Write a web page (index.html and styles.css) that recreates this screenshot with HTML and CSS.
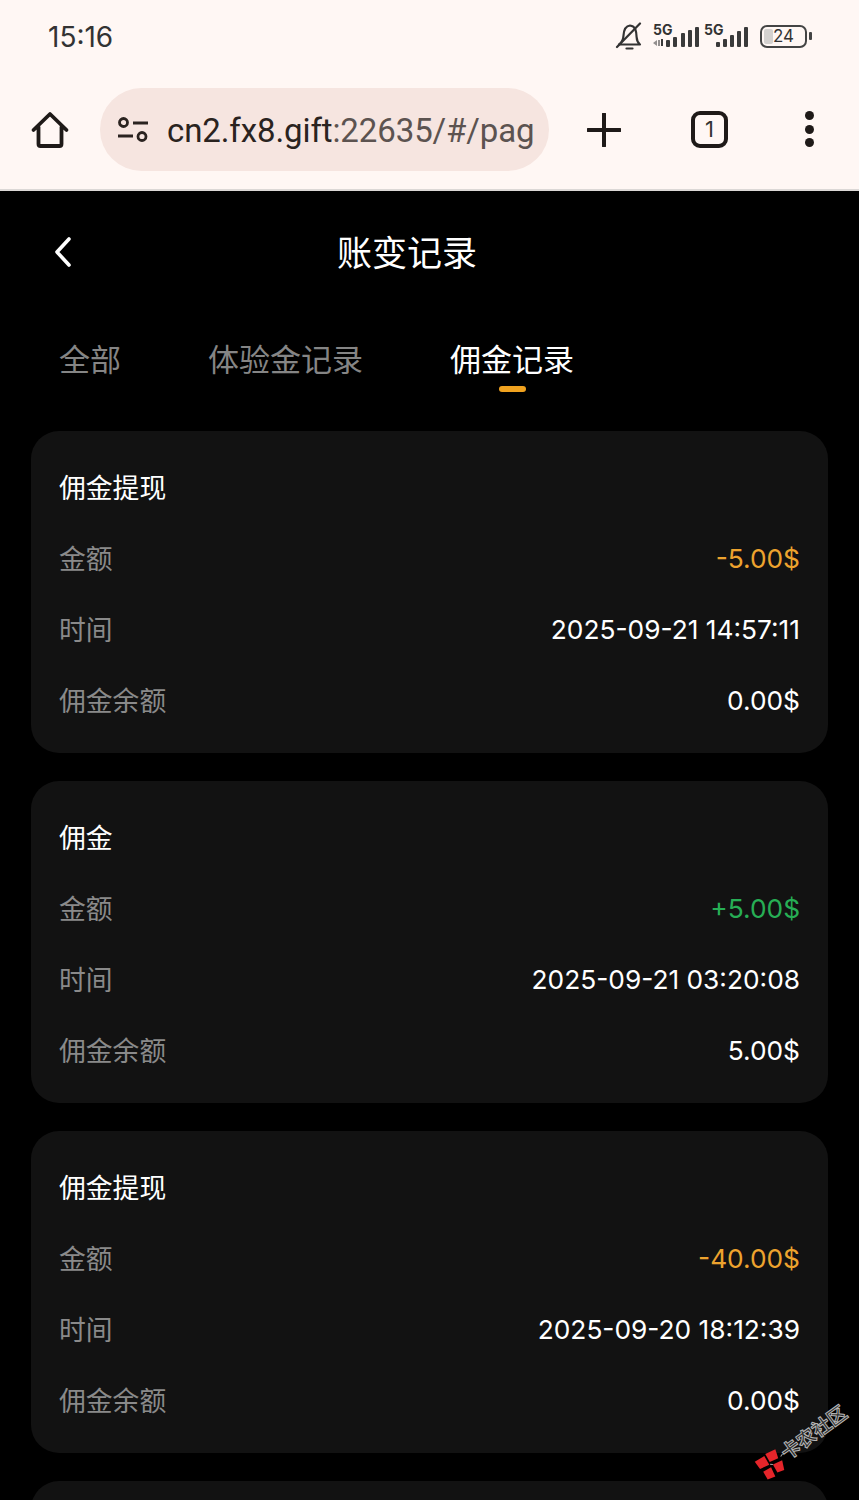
FILE: index.html
```html
<!DOCTYPE html>
<html lang="zh-CN">
<head>
<meta charset="utf-8">
<title>账变记录</title>
<link rel="stylesheet" href="styles.css">
</head>
<body>
<header class="chrome">
  <div class="status">
    <span class="clock">15:16</span>
    <div class="status-icons">
      <svg class="bell" viewBox="0 0 28 28" width="28" height="28"><path d="M4 22.500h21c-2.500-2-3.200-4-3.400-7.500-.3-5.500-.8-11-6.600-11.500C9.500 4 8.800 9 8.500 13.500 8.300 17.500 7.500 20 4 22.500Z" fill="none" stroke="#333" stroke-width="2.200" stroke-linejoin="round"/><path d="M2 25 25 1.500" stroke="#333" stroke-width="2.200" stroke-linecap="round"/><path d="M11.500 26.500h6" stroke="#333" stroke-width="2.200" stroke-linecap="round"/></svg>
      <div class="signal first">
        <span class="net">5G</span>
        <svg viewBox="0 0 46 24" width="46" height="24"><g fill="#3a3a3a"><path d="M0 19l4-3v6zM5 16h2v6H5z" opacity=".55"/><path d="M8 15h2v7H8z"/><rect x="13" y="16" width="4" height="7" rx="1"/><rect x="20" y="13" width="4" height="10" rx="1"/><rect x="28" y="9" width="4" height="14" rx="1"/><rect x="35" y="6" width="4" height="17" rx="1"/><rect x="42" y="3" width="4" height="20" rx="1"/></g></svg>
      </div>
      <div class="signal second">
        <span class="net">5G</span>
        <svg viewBox="0 0 45 24" width="45" height="24"><g fill="#3a3a3a"><rect x="12" y="18" width="4" height="5" rx="1"/><rect x="19" y="15" width="4" height="8" rx="1"/><rect x="26" y="11" width="4" height="12" rx="1"/><rect x="33" y="7" width="4" height="16" rx="1"/><rect x="40" y="3" width="4" height="20" rx="1"/></g></svg>
      </div>
      <div class="battery"><span class="battery-fill"></span><span class="battery-num">24</span></div>
      <span class="battery-cap"></span>
    </div>
  </div>
  <div class="toolbar">
    <svg class="home" viewBox="0 0 40 40" width="40" height="40"><path d="M3.500 20 20 4l16.500 16M8.500 17v17a2 2 0 0 0 2 2h19a2 2 0 0 0 2-2V17" fill="none" stroke="#1f1a18" stroke-width="3.800" stroke-linecap="round" stroke-linejoin="round"/></svg>
    <div class="omnibox">
      <svg class="tune" viewBox="0 0 34 28" width="34" height="28"><g fill="none" stroke="#2a2320" stroke-width="2.800"><circle cx="6.500" cy="6.500" r="4"/><circle cx="25" cy="20.500" r="4"/><path d="M16 7h15M1 20h15"/></g></svg>
      <div class="url"><span class="url-host">cn2.fx8.gift</span><span class="url-rest">:22635/#/pag</span></div>
    </div>
    <svg class="plus" viewBox="0 0 34 34" width="34" height="34"><path d="M17 1v32M1 17h32" stroke="#1f1a18" stroke-width="4" stroke-linecap="round"/></svg>
    <div class="tabs-count">1</div>
    <div class="menu"><i></i><i></i><i></i></div>
  </div>
</header>

<main class="page">
  <div class="nav">
    <svg class="back" viewBox="0 0 18 30" width="18" height="30"><path d="M15 2 3 15l12 13" fill="none" stroke="#fff" stroke-width="3.600" stroke-linecap="round" stroke-linejoin="round"/></svg>
    <h1 class="nav-title">账变记录</h1>
  </div>
  <nav class="tabs">
    <span class="tab">全部</span>
    <span class="tab">体验金记录</span>
    <span class="tab active">佣金记录</span>
  </nav>

  <section class="list">
    <article class="card">
      <h2 class="card-title">佣金提现</h2>
      <div class="row"><span class="label">金额</span><span class="value minus">-5.00$</span></div>
      <div class="row"><span class="label">时间</span><span class="value">2025-09-21 14:57:11</span></div>
      <div class="row"><span class="label">佣金余额</span><span class="value">0.00$</span></div>
    </article>
    <article class="card">
      <h2 class="card-title">佣金</h2>
      <div class="row"><span class="label">金额</span><span class="value plus-val">+5.00$</span></div>
      <div class="row"><span class="label">时间</span><span class="value">2025-09-21 03:20:08</span></div>
      <div class="row"><span class="label">佣金余额</span><span class="value">5.00$</span></div>
    </article>
    <article class="card">
      <h2 class="card-title">佣金提现</h2>
      <div class="row"><span class="label">金额</span><span class="value minus">-40.00$</span></div>
      <div class="row"><span class="label">时间</span><span class="value">2025-09-20 18:12:39</span></div>
      <div class="row"><span class="label">佣金余额</span><span class="value">0.00$</span></div>
    </article>
    <article class="card"></article>
  </section>
</main>

<div class="watermark">
  <svg class="wm-logo" viewBox="0 0 26 26" width="26" height="26"><g fill="#e5252a"><path d="M1 1l11 1-1 10-10-2z"/><path d="M14 1l11 2-3 9-9-2z"/><path d="M2 14l9 1-2 10-8-2z"/><path d="M14 14l10 2-4 9-7-2z"/></g><path d="M12 12l2 2M25 12l3-1" stroke="#aaa" stroke-width="1"/></svg>
  <span class="wm-text">卡农社区</span>
</div>
</body>
</html>
```
FILE: styles.css
```css
* { box-sizing: border-box; }
html, body { margin: 0; padding: 0; }
body {
  width: 859px;
  height: 1500px;
  overflow: hidden;
  position: relative;
  background: #000;
  font-family: Inter, "Noto Sans CJK SC", sans-serif;
}

.chrome {
  height: 191px;
  background: #fff7f4;
  border-bottom: 2px solid #dcd8d6;
}
.status {
  height: 75px;
  padding: 19px 47px 0 48px;
  display: flex;
  justify-content: space-between;
  align-items: flex-start;
}
.clock { font-size: 28px; line-height: 36px; color: #333; font-weight: 400; }
.status-icons { display: flex; align-items: center; height: 34px; }
.bell { margin-right: 10px; flex: none; }
.signal { position: relative; height: 24px; flex: none; }
.signal.first { width: 46px; }
.signal.second { width: 45px; margin-left: 5px; }
.signal svg { display: block; }
.signal .net {
  position: absolute;
  left: 0;
  top: -1px;
  font-size: 14px;
  font-weight: 700;
  line-height: 14px;
  color: #333;
}
.battery {
  position: relative;
  width: 47px;
  height: 23px;
  margin-left: 11px;
  border: 2.500px solid #444;
  border-radius: 7px;
  display: flex;
  align-items: center;
  justify-content: center;
  overflow: hidden;
  flex: none;
}
.battery-fill { position: absolute; left: 2px; top: 2px; bottom: 2px; width: 9px; background: #d4d1cf; border-radius: 2px; }
.battery-num { position: relative; font-size: 17px; color: #333; line-height: 18px; }
.battery-cap { width: 3px; height: 8px; margin-left: 2px; background: #444; border-radius: 1px; flex: none; }

.toolbar {
  height: 114px;
  display: flex;
  align-items: flex-start;
  padding: 13px 0 0 30px;
}
.home { margin-top: 22px; flex: none; }
.omnibox {
  width: 449px;
  height: 83px;
  margin-left: 30px;
  border-radius: 42px;
  background: #f6e5e0;
  display: flex;
  align-items: center;
  padding-left: 17px;
  flex: none;
  overflow: hidden;
}
.tune { flex: none; }
.url {
  margin-left: 16px;
  white-space: nowrap;
  font-family: Roboto, sans-serif;
  font-size: 33px;
  line-height: 44px;
  letter-spacing: -0.1px;
  padding-top: 2px;
}
.url-host { color: #2a2320; }
.url-rest { color: #5c5350; }
.plus { margin: 25px 0 0 38px; flex: none; }
.tabs-count {
  margin: 23px 0 0 70px;
  width: 37px;
  height: 37px;
  border: 4px solid #1f1a18;
  border-radius: 9px;
  font-size: 22px;
  line-height: 29px;
  text-align: center;
  color: #333;
  flex: none;
}
.menu { margin: 23px 0 0 77px; display: flex; flex-direction: column; gap: 4.500px; }
.menu i { display: block; width: 9px; height: 9px; border-radius: 50%; background: #1f1a18; }

.page { height: 1309px; overflow: hidden; }
.nav { height: 125px; padding: 46px 0 0 54px; display: flex; align-items: flex-start; }
.back { flex: none; }
.nav-title {
  margin: 0 0 0 265px;
  font-size: 35px;
  line-height: 32px;
  font-weight: 400;
  color: #fff;
}
.tabs { display: flex; gap: 87px; padding: 25px 0 0 59px; height: 115px; }
.tab { font-size: 31px; line-height: 38px; color: #858585; height: 38px; position: relative; white-space: nowrap; }
.tab.active { color: #fff; }
.tab.active::after {
  content: "";
  position: absolute;
  left: 50%;
  top: 45px;
  width: 27px;
  height: 6px;
  margin-left: -13px;
  border-radius: 3px;
  background: #f0a21f;
}

.list { display: flex; flex-direction: column; gap: 28px; padding: 0 31px; }
.card {
  height: 322px;
  flex: none;
  background: #121212;
  border-radius: 28px;
  padding: 40px 28px 0;
}
.card-title { margin: 0; font-size: 26.800px; font-weight: 400; line-height: 34px; color: #fff; height: 52px; }
.row { display: flex; justify-content: space-between; align-items: center; height: 71px; }
.label { font-size: 26.800px; color: #8a8a8a; margin-top: -3px; }
.value { font-size: 26.300px; color: #fff; }
.minus { color: #eda32e; }
.plus-val { color: #27ae55; }

.watermark {
  position: absolute;
  left: 761px;
  top: 1459px;
  display: flex;
  align-items: center;
  transform: rotate(-36deg);
  transform-origin: left center;
  white-space: nowrap;
}
.wm-logo { flex: none; overflow: visible; }
.wm-text {
  font-size: 19px;
  font-weight: 700;
  line-height: 26px;
  margin-left: 2px;
  color: #2a2a2a;
  -webkit-text-stroke: 1px #b5b5b5;
}
```
